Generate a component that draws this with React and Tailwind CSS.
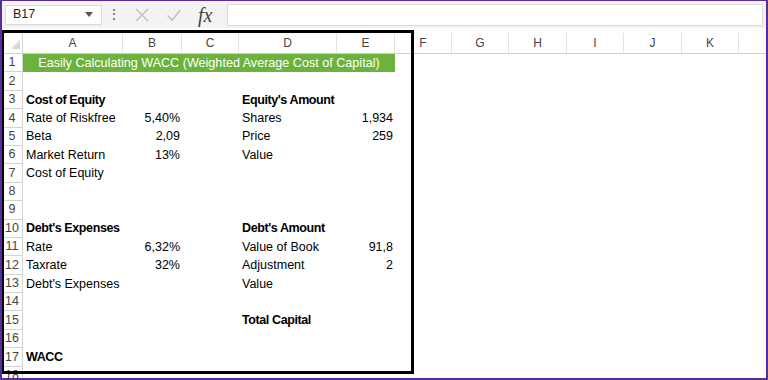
import React from "react";

const COLS = [
  { key: "A", w: 100 },
  { key: "B", w: 59 },
  { key: "C", w: 57 },
  { key: "D", w: 98 },
  { key: "E", w: 58 },
  { key: "F", w: 57 },
  { key: "G", w: 57 },
  { key: "H", w: 58 },
  { key: "I", w: 57 },
  { key: "J", w: 58 },
  { key: "K", w: 57 },
  { key: "L", w: 40 },
];

// row number -> cells { A, B, D, E, bold }
const ROWS = [
  {},
  {},
  { A: "Cost of Equity", D: "Equity's Amount", bold: true },
  { A: "Rate of Riskfree", B: "5,40%", D: "Shares", E: "1,934" },
  { A: "Beta", B: "2,09", D: "Price", E: "259" },
  { A: "Market Return", B: "13%", D: "Value" },
  { A: "Cost of Equity" },
  {},
  {},
  { A: "Debt's Expenses", D: "Debt's Amount", bold: true },
  { A: "Rate", B: "6,32%", D: "Value of Book", E: "91,8" },
  { A: "Taxrate", B: "32%", D: "Adjustment", E: "2" },
  { A: "Debt's Expenses", D: "Value" },
  {},
  { D: "Total Capital", bold: true },
  {},
  { A: "WACC", bold: true },
  {},
];

const font = { fontFamily: "'Liberation Sans', Arial, sans-serif" };

function RowHead({ n }) {
  return (
    <div className="w-[21px] shrink-0 border-r border-b border-[#d4d4d4] flex items-center justify-center text-[12.5px] text-[#444]">
      {n}
    </div>
  );
}

function DataRow({ n, row }) {
  return (
    <div className="flex h-[18.4px]">
      <RowHead n={n} />
      {COLS.map((c) => {
        const v = row[c.key];
        const right = c.key === "B" || c.key === "E";
        return (
          <div
            key={c.key}
            style={{ width: c.w }}
            className={`shrink-0 flex items-center whitespace-nowrap text-[12.5px] text-black ${
              right ? "justify-end pr-[2px]" : "pl-[3px]"
            } ${row.bold ? "font-bold tracking-[-0.4px]" : ""}`}
          >
            {v}
          </div>
        );
      })}
    </div>
  );
}

export default function App() {
  return (
    <div
      className="w-[768px] h-[380px] bg-white border-l-2 border-r-2 border-t border-b-2 border-[#5a2aa0] overflow-hidden relative"
      style={font}
    >
      {/* formula bar */}
      <div className="h-[27px] bg-[#f3f3f3] flex items-center">
        <div className="ml-[3px] w-[97px] h-[20px] bg-white border border-[#dadada] flex items-center pl-[7px] pr-[8px] text-[12.5px] text-[#222]">
          <span className="flex-1">B17</span>
          <svg width="8" height="5" viewBox="0 0 8 5">
            <path d="M0 0h8L4 5z" fill="#555" />
          </svg>
        </div>
        <div className="w-[24px] flex justify-center text-[#666] text-[14px]">⋮</div>
        <div className="h-[22px] w-[101px] flex items-center gap-[16px] pl-[8px]">
          <svg width="16" height="16" viewBox="0 0 16 16">
            <path d="M2 2l12 12M14 2L2 14" stroke="#c2c2c2" strokeWidth="1.5" />
          </svg>
          <svg width="16" height="16" viewBox="0 0 16 16">
            <path d="M1.5 8.5l4.5 4.5 8.5-10" stroke="#c2c2c2" strokeWidth="1.6" fill="none" />
          </svg>
          <span
            className="text-[20px] italic text-[#444] leading-none"
            style={{ fontFamily: "'Liberation Serif', 'Times New Roman', serif" }}
          >
            fx
          </span>
        </div>
        <div className="flex-1 mr-[3px] h-[22px] bg-white border border-[#dadada]" />
      </div>

      {/* grid */}
      <div className="mt-[5px] relative">
        {/* column headers */}
        <div className="flex h-[21px] border-b border-[#cfcfcf]">
          <div className="w-[21px] shrink-0 border-r border-[#d4d4d4] relative">
            <svg className="absolute right-[2px] bottom-[4px]" width="9" height="9" viewBox="0 0 9 9">
              <path d="M9 0v9H0z" fill="#d8d8d8" />
            </svg>
          </div>
          {COLS.map((c) => (
            <div
              key={c.key}
              style={{ width: c.w }}
              className="shrink-0 flex items-center justify-center text-[12px] text-[#444] border-r border-[#e2e2e2]"
            >
              {c.key !== "L" ? c.key : ""}
            </div>
          ))}
        </div>

        {/* title row */}
        <div className="flex h-[18.4px]">
          <RowHead n={1} />
          <div className="w-[372px] shrink-0 bg-[#6bb33c] flex items-center justify-center text-[12.6px] text-white whitespace-nowrap">
            Easily Calculating WACC (Weighted Average Cost of Capital)
          </div>
        </div>

        {ROWS.slice(1).map((r, i) => (
          <DataRow key={i} n={i + 2} row={r} />
        ))}

        {/* thick outline drawn over the sheet */}
        <div className="absolute left-0 top-[-3px] w-[412px] h-[344px] border-[3px] border-l-2 border-black pointer-events-none" />
      </div>
    </div>
  );
}
